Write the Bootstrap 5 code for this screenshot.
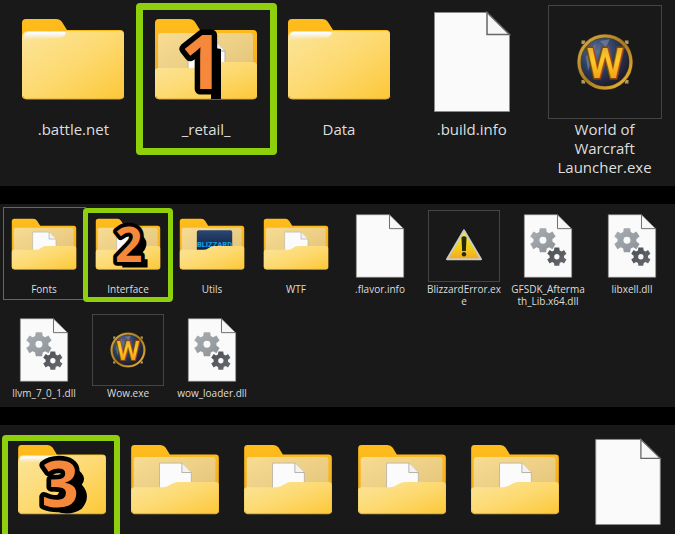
<!DOCTYPE html>
<html lang="en">
<head>
<meta charset="utf-8">
<meta name="viewport" content="width=device-width, initial-scale=1">
<title>World of Warcraft folders</title>
<link href="https://cdn.jsdelivr.net/npm/bootstrap@5.3.0/dist/css/bootstrap.min.css" rel="stylesheet">
<style>
body { background: #000; color: #dedede; font-family: "Open Sans", "Noto Sans", sans-serif; }
.pane { background: #191919; overflow: hidden; }
.pane-lg { --slot: 114px; --ring: 7px; font-size: 15px; line-height: 19px; padding: 5px 4px 9px 7px; }
.pane-sm { --slot: 72px; --ring: 5px; font-size: 10px; line-height: 12px; padding: 6px 1px 8px 2px; margin: 18px 0; }
.pane-md { --slot: 98px; --ring: 6px; padding: 8px 0 0 5px; }
.pane-md .row { margin-right: -10px; }
.pane-sm .row { row-gap: 7px; }
.row-cols-eight > * { width: 12.5%; }
.pic { width: var(--slot); height: var(--slot); display: block; flex: none; }
.name { overflow-wrap: anywhere; max-width: 100%; padding-top: 1px; }
.pane-lg .name { width: 104px; }
.pane-sm .name { width: 74px; }
.framed { outline: 1px solid #444; outline-offset: -1px; }
.ring { border: var(--ring) solid #8fd00c; border-radius: 4px; pointer-events: none; }
.pane-lg .ring { inset: -2px -4px 22px -4px; }
.pane-sm .ring { inset: -2px -3px 5px -3px; }
.pane-md .ring { inset: 2px -2px -30px -3px; }
.focus-frame { border: 1px solid #666; inset: -3px 0 7px 1px; }
.digit { font: 700 76px "Open Sans", "Noto Sans", sans-serif; text-anchor: middle; stroke-linejoin: round; }
.wow { font: 500 42px Roboto, sans-serif; text-anchor: middle; }
.blizz { font: bold 12px Roboto, sans-serif; text-anchor: middle; }
</style>
<script src="https://cdn.jsdelivr.net/npm/bootstrap@5.3.0/dist/js/bootstrap.bundle.min.js"></script>
</head>
<body class="min-vh-100 d-flex flex-column">
<svg width="0" height="0" class="position-absolute" aria-hidden="true">
  <defs>
    <linearGradient id="gBack" x1="0" y1="0" x2="0" y2="1"><stop offset="0" stop-color="#ffbd1c"/><stop offset="1" stop-color="#eda81d"/></linearGradient>
    <linearGradient id="gFront" x1="0" y1="0" x2="1" y2="1"><stop offset="0" stop-color="#fbe59b"/><stop offset=".5" stop-color="#fdd970"/><stop offset="1" stop-color="#fcc838"/></linearGradient>
    <linearGradient id="gSheet" x1="0" y1="0" x2="1" y2="1"><stop offset="0" stop-color="#f7dc92"/><stop offset="1" stop-color="#e3c27a"/></linearGradient>
    <linearGradient id="gWhite" x1="0" y1="0" x2="0" y2="1"><stop offset="0" stop-color="#fff"/><stop offset=".35" stop-color="#f6f3ea"/><stop offset="1" stop-color="#fbe59b" stop-opacity="0"/></linearGradient>
    <linearGradient id="gGearA" x1="0" y1="0" x2="1" y2="1"><stop offset="0" stop-color="#a9aeb3"/><stop offset="1" stop-color="#8d9298"/></linearGradient>
    <linearGradient id="gGearB" x1="0" y1="0" x2="1" y2="1"><stop offset="0" stop-color="#4b4f53"/><stop offset="1" stop-color="#686c70"/></linearGradient>
    <linearGradient id="gGold" x1="0" y1="0" x2="0" y2="1"><stop offset="0" stop-color="#d9a23c"/><stop offset=".45" stop-color="#ffc928"/><stop offset="1" stop-color="#e58a14"/></linearGradient>
    <linearGradient id="gRim" x1="0" y1="0" x2="1" y2="1"><stop offset="0" stop-color="#d8b04a"/><stop offset=".5" stop-color="#a87a20"/><stop offset="1" stop-color="#eebb3c"/></linearGradient>
    <radialGradient id="gOrb" cx=".35" cy=".3" r=".75"><stop offset="0" stop-color="#5c6f94"/><stop offset=".5" stop-color="#2c3c5e"/><stop offset="1" stop-color="#1a1620"/></radialGradient>
    <linearGradient id="gWarn" x1="0" y1="0" x2="0" y2="1"><stop offset="0" stop-color="#f6ee3a"/><stop offset=".55" stop-color="#f2d21a"/><stop offset="1" stop-color="#f5a91c"/></linearGradient>
    <linearGradient id="gUtil" x1="0" y1="0" x2="0" y2="1"><stop offset="0" stop-color="#2a4674"/><stop offset="1" stop-color="#0a1830"/></linearGradient>
    <path id="gear" d="M-5-19H5L6-13 10-11 15-14 20-6 15-2V2L20 6 15 14 10 11 6 13 5 19H-5L-6 13-10 11-15 14-20 6-15 2V-2L-20-6-15-14-10-11-6-13ZM0-5.500A5.500 5.500 0 1 0 0 5.500 5.500 5.500 0 1 0 0-5.500Z" fill-rule="evenodd"/>
    <path id="backShape" d="M6 18Q6 14 10 14H40Q44 14 46 17L51 25H104Q108 25 108 29V90Q108 94 104 94H10Q6 94 6 90Z" fill="url(#gBack)"/>
  </defs>
  <symbol id="folder" viewBox="0 0 114 114">
    <use href="#backShape"/>
    <path d="M6 34Q6 26 12 26H104Q108 26 108 30V90Q108 94 104 94H10Q6 94 6 90Z" fill="url(#gFront)"/>
    <path d="M8 36V31Q8 27 13 27H50Q49 33 42 33L14 34Q10 34 8 36Z" fill="url(#gWhite)"/>
    <path d="M7 91Q8 94 10 94H104Q107 94 108 91" fill="none" stroke="#d9a63a"/>
  </symbol>
  <symbol id="openback" viewBox="0 0 114 114">
    <use href="#backShape"/>
    <path d="M9 31Q9 28 12 28H101Q104 28 104 31V75H9Z" fill="url(#gSheet)"/>
  </symbol>
  <symbol id="openfront" viewBox="0 0 114 114">
    <path d="M6 66Q6 63 10 63H43Q48 63 52 60T60 57H104Q108 57 108 61V90Q108 94 104 94H10Q6 94 6 90Z" fill="url(#gFront)"/>
    <path d="M7 91Q8 94 10 94H104Q107 94 108 91" fill="none" stroke="#d9a63a"/>
  </symbol>
  <symbol id="openfolder" viewBox="0 0 114 114">
    <use href="#openback"/>
    <path d="M39 35H65L76 46V70H39Z" fill="#fbfbfb" stroke="#b9b3a5"/>
    <path d="M65 35V46H76" fill="#f2f2f2" stroke="#a9a69c"/>
    <use href="#openfront"/>
  </symbol>
  <symbol id="file" viewBox="0 0 114 114">
    <path d="M19.500 7.500H72L94.500 29.500V106.500H19.500Z" fill="#fafafa" stroke="#8a8a8a"/>
    <path d="M72 7.500V29.500H94.500Z" fill="#f7f7f7" stroke="#666" stroke-width="1.500"/>
  </symbol>
  <symbol id="dll" viewBox="0 0 114 114">
    <use href="#file"/>
    <use href="#gear" x="49" y="48" fill="url(#gGearA)"/>
    <use href="#gear" transform="translate(71 74) scale(.76)" fill="url(#gGearB)"/>
  </symbol>
  <symbol id="orb" viewBox="0 0 114 114">
    <path d="M34 35H80V79H34Z" fill="#2a2416"/>
    <path d="M35 39V37H37M77 37H79V39M79 75V77H77M37 77H35V75" fill="none" stroke="#b09a5c" stroke-width="3"/>
    <circle cx="57" cy="57" r="26" fill="url(#gOrb)" stroke="#5e4312" stroke-width="4"/>
    <circle cx="57" cy="57" r="26" fill="none" stroke="url(#gRim)" stroke-width="3"/>
    <path d="M38 52L48 38 44 54 40 66ZM52 36L62 34 58 42Z" fill="#8798b8" opacity=".5"/>
  </symbol>
  <symbol id="warn" viewBox="0 0 114 114">
    <path d="M57 32L84 78H30Z" fill="url(#gWarn)" stroke="#c9cbc9" stroke-width="3" stroke-linejoin="round"/>
    <path d="M54 44Q57 41 60 44L59 64H55Z" fill="#28260e" stroke="#28260e" stroke-width="2"/>
    <circle cx="57" cy="70" r="3.500" fill="#28260e"/>
  </symbol>
</svg>

<main class="d-flex flex-column flex-grow-1">
  <section class="pane pane-lg" aria-label="Game folder">
    <div class="row row-cols-5 g-0 text-center">
      <div class="d-flex flex-column align-items-center"><svg class="pic"><use href="#folder"/></svg><div class="name">.battle.net</div></div>
      <div class="d-flex flex-column align-items-center position-relative">
        <svg class="pic" viewBox="0 0 114 114"><use href="#openfolder"/><g class="digit"><path d="M60 42L72 44V94H62V80Z" fill="#000"/><text x="53" y="84" fill="#f5883a" stroke="#000" stroke-width="11" paint-order="stroke">1</text></g></svg>
        <div class="name">_retail_</div><span class="ring position-absolute"></span>
      </div>
      <div class="d-flex flex-column align-items-center"><svg class="pic"><use href="#folder"/></svg><div class="name">Data</div></div>
      <div class="d-flex flex-column align-items-center"><svg class="pic"><use href="#file"/></svg><div class="name">.build.info</div></div>
      <div class="d-flex flex-column align-items-center"><svg class="pic framed" viewBox="0 0 114 114"><use href="#orb"/><text class="wow" x="57" y="73" fill="url(#gGold)" stroke="#8a4608" stroke-width="3" paint-order="stroke">W</text></svg><div class="name">World of Warcraft Launcher.exe</div></div>
    </div>
  </section>

  <section class="pane pane-sm" aria-label="Retail folder">
    <div class="row row-cols-eight g-0 text-center">
      <div class="d-flex flex-column align-items-center position-relative"><svg class="pic"><use href="#openfolder"/></svg><div class="name">Fonts</div><span class="focus-frame position-absolute"></span></div>
      <div class="d-flex flex-column align-items-center position-relative">
        <svg class="pic" viewBox="0 0 114 114"><use href="#openfolder"/><g class="digit"><path d="M72 36Q92 46 84 62L72 78H88V91H48V80Z" fill="#000"/><text x="58" y="82" fill="#f5883a" stroke="#000" stroke-width="12" paint-order="stroke">2</text></g></svg>
        <div class="name">Interface</div><span class="ring position-absolute"></span>
      </div>
      <div class="d-flex flex-column align-items-center"><svg class="pic" viewBox="0 0 114 114"><use href="#openback"/><rect x="33" y="32" width="56" height="40" rx="3" fill="url(#gUtil)"/><text class="blizz" x="61" y="58" fill="#16a4e8">BLIZZARD</text><use href="#openfront"/></svg><div class="name">Utils</div></div>
      <div class="d-flex flex-column align-items-center"><svg class="pic"><use href="#openfolder"/></svg><div class="name">WTF</div></div>
      <div class="d-flex flex-column align-items-center"><svg class="pic"><use href="#file"/></svg><div class="name">.flavor.info</div></div>
      <div class="d-flex flex-column align-items-center"><svg class="pic framed"><use href="#warn"/></svg><div class="name">BlizzardError.exe</div></div>
      <div class="d-flex flex-column align-items-center"><svg class="pic"><use href="#dll"/></svg><div class="name">GFSDK_Aftermath_Lib.x64.dll</div></div>
      <div class="d-flex flex-column align-items-center"><svg class="pic"><use href="#dll"/></svg><div class="name">libxell.dll</div></div>
      <div class="d-flex flex-column align-items-center"><svg class="pic"><use href="#dll"/></svg><div class="name">llvm_7_0_1.dll</div></div>
      <div class="d-flex flex-column align-items-center"><svg class="pic framed" viewBox="0 0 114 114"><use href="#orb"/><text class="wow" x="57" y="73" fill="url(#gGold)" stroke="#8a4608" stroke-width="3" paint-order="stroke">W</text></svg><div class="name">Wow.exe</div></div>
      <div class="d-flex flex-column align-items-center"><svg class="pic"><use href="#dll"/></svg><div class="name">wow_loader.dll</div></div>
    </div>
  </section>

  <section class="pane pane-md flex-grow-1" aria-label="Interface folder">
    <div class="row row-cols-6 g-0">
      <div class="d-flex justify-content-center position-relative">
        <svg class="pic" viewBox="0 0 114 114"><use href="#folder"/><g class="digit"><path d="M72 40Q88 50 80 60Q92 74 80 88Q66 98 46 90L44 84Z" fill="#000"/><text x="55" y="86" fill="#f5883a" stroke="#000" stroke-width="11" paint-order="stroke">3</text></g></svg>
        <span class="ring position-absolute"></span>
      </div>
      <div class="d-flex justify-content-center"><svg class="pic"><use href="#openfolder"/></svg></div>
      <div class="d-flex justify-content-center"><svg class="pic"><use href="#openfolder"/></svg></div>
      <div class="d-flex justify-content-center"><svg class="pic"><use href="#openfolder"/></svg></div>
      <div class="d-flex justify-content-center"><svg class="pic"><use href="#openfolder"/></svg></div>
      <div class="d-flex justify-content-center"><svg class="pic"><use href="#file"/></svg></div>
    </div>
  </section>
</main>
</body>
</html>
